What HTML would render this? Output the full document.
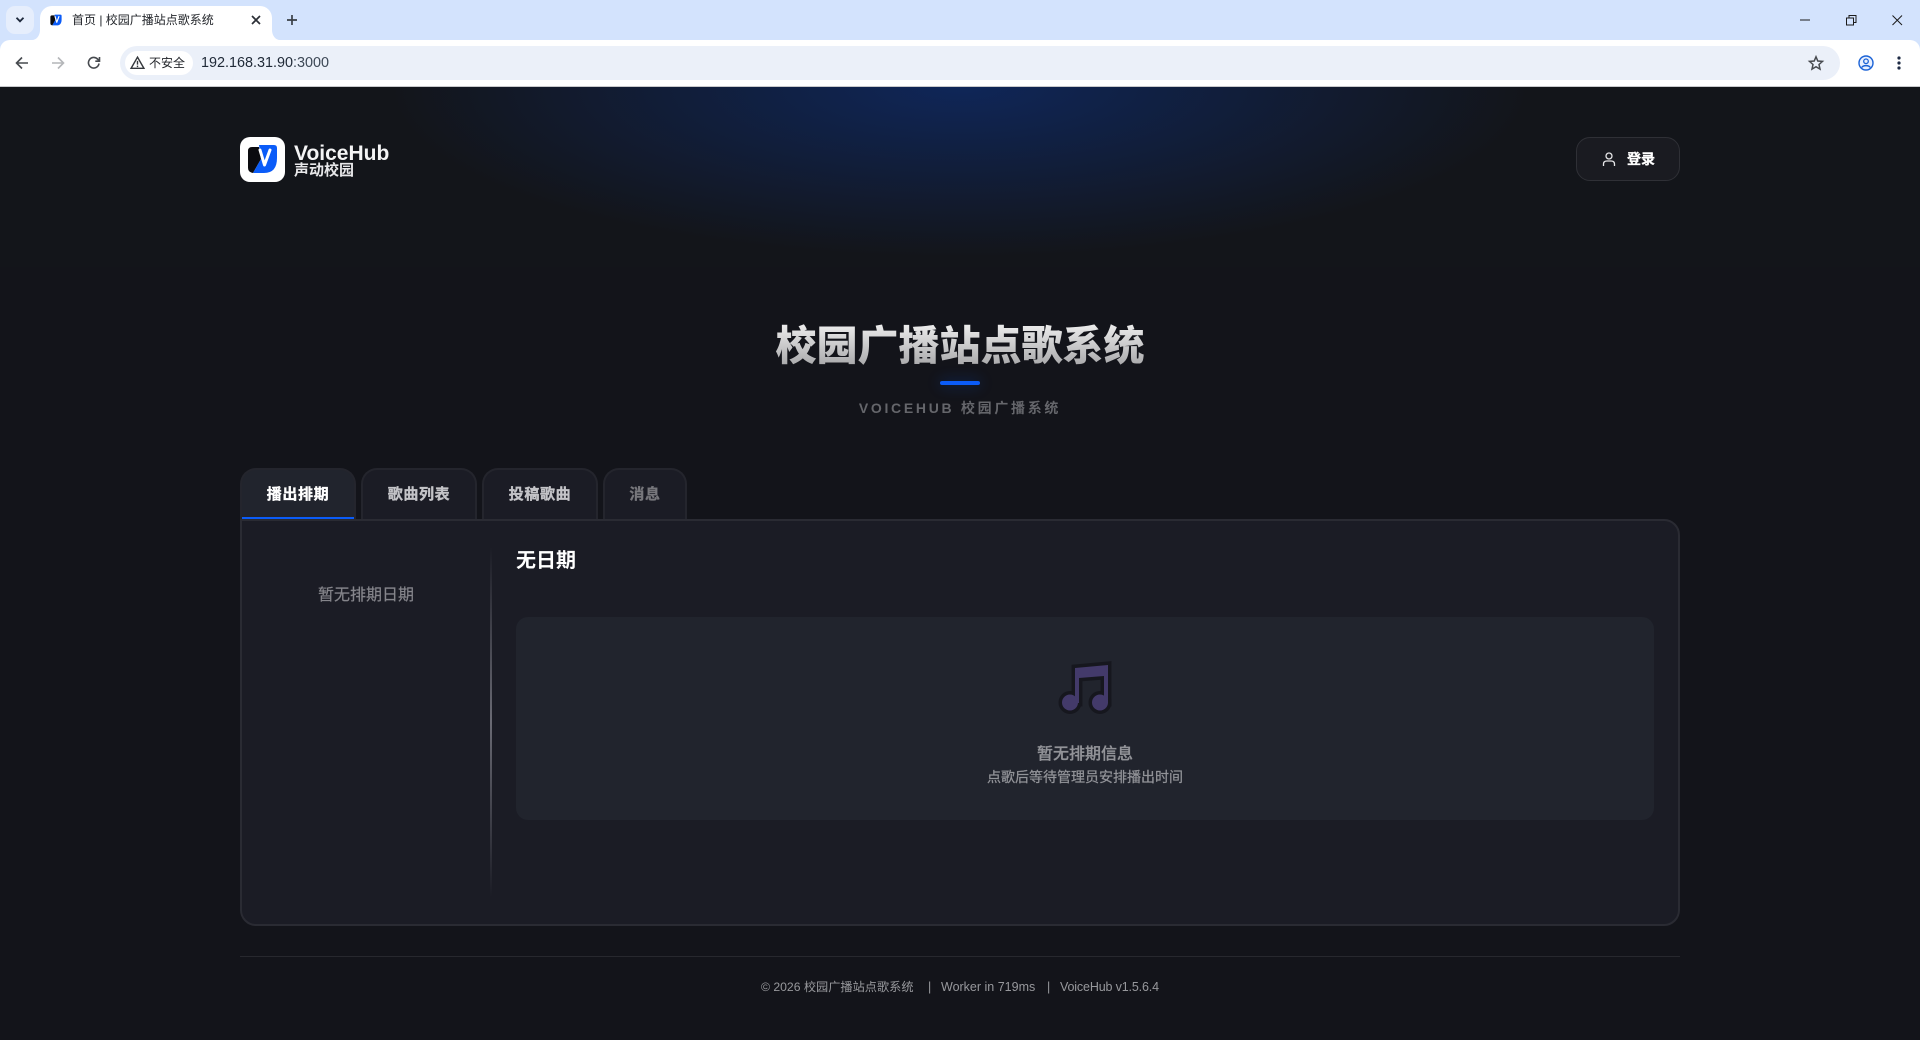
<!DOCTYPE html>
<html lang="zh">
<head>
<meta charset="utf-8">
<title>首页 | 校园广播站点歌系统</title>
<style>
*{box-sizing:border-box;margin:0;padding:0}
html,body{width:1920px;height:1040px;overflow:hidden;background:#13141a}
body{position:relative;font-family:"Liberation Sans","Noto Sans CJK SC",sans-serif}
.a{position:absolute;white-space:nowrap}
.c{text-align:center}
.tab{position:absolute;top:468px;height:51px;background:#1b1c25;border:2px solid #24252d;border-bottom:0;border-radius:16px 16px 0 0;color:#c4c4c8;font-size:15px;font-weight:700;text-align:center;line-height:49px;letter-spacing:.6px;-webkit-text-stroke:.35px currentColor}
svg{position:absolute;overflow:visible}
.f{top:979px;font-size:12.500px;line-height:17px;color:#97989c}
</style>
</head>
<body>
<!-- browser chrome -->
<div class="a" style="left:0;top:0;width:1920px;height:50px;background:#d3e3fd"></div>
<div class="a" style="left:0;top:40px;width:1920px;height:46px;background:#fff;border-radius:10px 10px 0 0"></div>
<div class="a" style="left:0;top:86px;width:1920px;height:1px;background:#c8c9cc"></div>
<div class="a" style="left:6px;top:6px;width:28px;height:28px;border-radius:9px;background:#e6eefc"></div>
<svg style="left:15px;top:16px" width="10" height="8" viewBox="0 0 10 8"><path d="M1.500 1.800 5 5.300 8.500 1.800" fill="none" stroke="#1f2a3d" stroke-width="1.800"/></svg>
<div class="a" style="left:40px;top:6px;width:232px;height:34px;background:#fff;border-radius:12px 12px 0 0"></div>
<svg style="left:32px;top:30px" width="8" height="10"><path d="M8 0V10H0A8 10 0 0 0 8 0Z" fill="#fff"/></svg>
<svg style="left:272px;top:30px" width="8" height="10"><path d="M0 0V10H8A8 10 0 0 1 0 0Z" fill="#fff"/></svg>
<svg style="left:50px;top:14px" width="12" height="12" viewBox="7 7 31 30"><path d="M8 14Q8 10 12 10H19L21 22 13 36Q8 35 8 31Z" fill="#0b0b0f"/><path d="M19 8H34Q37 8 37 11V21Q37 36 24 36H13L21 22Z" fill="#0b5cf8"/><path d="M20 13 24.500 28 30 13" fill="none" stroke="#fff" stroke-width="3" stroke-linecap="round" stroke-linejoin="round"/></svg>
<div class="a" style="left:72px;top:12px;font-size:12px;line-height:16px;color:#23262b">首页 | 校园广播站点歌系统</div>
<svg style="left:251px;top:15px" width="10" height="10"><path d="M1 1 9 9M9 1 1 9" stroke="#2b2f36" stroke-width="1.700"/></svg>
<svg style="left:286px;top:14px" width="12" height="12"><path d="M6 1V11M1 6H11" stroke="#3a3f46" stroke-width="1.700"/></svg>
<svg style="left:1800px;top:19px" width="11" height="2"><path d="M0 1H10" stroke="#1b1b1b" stroke-width="1"/></svg>
<svg style="left:1846px;top:15px" width="11" height="11"><path d="M.5 3H7.500V10H.5ZM3 3V.5H10V7.500H7.500" fill="none" stroke="#1b1b1b"/></svg>
<svg style="left:1892px;top:15px" width="11" height="11"><path d="M.5 .5 10 10M10 .5 .5 10" stroke="#1b1b1b"/></svg>
<svg style="left:15px;top:56px" width="14" height="14" viewBox="0 0 14 14"><path d="M13 7H2M7 1.500 1.500 7 7 12.500" fill="none" stroke="#474a4f" stroke-width="1.600"/></svg>
<svg style="left:51px;top:56px" width="14" height="14" viewBox="0 0 14 14"><path d="M1 7H12M7 1.500 12.500 7 7 12.500" fill="none" stroke="#b4b6b9" stroke-width="1.600"/></svg>
<svg style="left:87px;top:56px" width="14" height="14" viewBox="0 0 14 14"><path d="M12 7.500A5.300 5.300 0 1 1 10.500 3L12.500 5M12.500 1V5.200H8.300" fill="none" stroke="#474a4f" stroke-width="1.600"/></svg>
<div class="a" style="left:120px;top:46px;width:1720px;height:34px;border-radius:17px;background:#ebf0f9"></div>
<div class="a" style="left:125px;top:51px;width:68px;height:24px;border-radius:12px;background:#fff"></div>
<svg style="left:130px;top:56px" width="15" height="14" viewBox="0 0 14 13"><path d="M7 1 13 11.500H1ZM7 4.500V8M7 9V10.300" fill="none" stroke="#35383d" stroke-width="1.300"/></svg>
<div class="a" style="left:149px;top:55px;font-size:12px;line-height:17px;color:#23262b">不安全</div>
<div class="a" style="left:201px;top:55px;font-size:14.400px;line-height:17px;color:#1f2937">192.168.31.90<span style="color:#3d4856">:3000</span></div>
<svg style="left:1808px;top:55px" width="16" height="16" viewBox="0 0 16 16"><path d="M8 1.800 9.800 6 14.500 6.400 11 9.500 12 14.100 8 11.700 4 14.100 5 9.500 1.500 6.400 6.200 6Z" fill="none" stroke="#474a4f" stroke-width="1.500"/></svg>
<svg style="left:1858px;top:55px" width="16" height="16" viewBox="0 0 16 16"><circle cx="8" cy="8" r="7" fill="#e9f0fe" stroke="#1a62d6" stroke-width="1.400"/><circle cx="8" cy="6.300" r="2.300" fill="none" stroke="#1a62d6" stroke-width="1.300"/><path d="M3.800 12.500C5 10 11 10 12.200 12.500" fill="none" stroke="#1a62d6" stroke-width="1.400"/></svg>
<svg style="left:1896px;top:55px" width="6" height="16"><circle cx="3" cy="3" r="1.600" fill="#1e2b45"/><circle cx="3" cy="8" r="1.600" fill="#1e2b45"/><circle cx="3" cy="13" r="1.600" fill="#1e2b45"/></svg>

<!-- page -->
<div class="a" style="left:0;top:87px;width:1920px;height:953px;background:#13141a"></div>
<div class="a" style="left:0;top:87px;width:1920px;height:180px;background:radial-gradient(ellipse 570px 170px at 960px 0,#0f2658 0%,#13151a 100%)"></div>

<!-- logo -->
<svg style="left:240px;top:137px" width="45" height="45" viewBox="0 0 45 45">
<rect width="45" height="45" rx="10" fill="#fff"/>
<path d="M8 14Q8 10 12 10H19L21 22 13 36Q8 35 8 31Z" fill="#0b0b0f"/>
<path d="M19 8H34Q37 8 37 11V21Q37 36 24 36H13L21 22Z" fill="#0b5cf8"/>
<path d="M20 13 24.500 28 30 13" fill="none" stroke="#fff" stroke-width="3" stroke-linecap="round" stroke-linejoin="round"/>
</svg>
<div class="a" style="left:294px;top:142px;font-size:21px;line-height:24px;font-weight:700;color:#f4f4f5">VoiceHub</div>
<div class="a" style="left:294px;top:162px;font-size:15px;line-height:18px;font-weight:700;color:#e8e8ea">声动校园</div>

<!-- login -->
<div class="a" style="left:1576px;top:137px;width:104px;height:44px;border-radius:14px;background:#1a1b21;border:1.500px solid #2f3036"></div>
<svg style="left:1602px;top:152px" width="14" height="15" viewBox="0 0 14 15"><circle cx="7" cy="4" r="3" fill="none" stroke="#e6e6e8" stroke-width="1.300"/><path d="M1.500 14V12C1.500 9.500 3 9 5 9H9C11 9 12.500 9.500 12.500 12V14" fill="none" stroke="#e6e6e8" stroke-width="1.300"/></svg>
<div class="a" style="left:1627px;top:150px;font-size:14px;line-height:18px;font-weight:700;color:#fff;-webkit-text-stroke:.3px #fff">登录</div>

<!-- heading -->
<div class="a c" style="left:660px;top:319px;width:600px;font-size:41px;line-height:54px;font-weight:900;background:linear-gradient(180deg,#f5f5f5,#9d9d9f);-webkit-background-clip:text;background-clip:text;color:transparent">校园广播站点歌系统</div>
<div class="a" style="left:940px;top:381px;width:40px;height:4px;border-radius:2px;background:#0b5cf8;box-shadow:0 0 14px rgba(11,92,248,.4)"></div>
<div class="a c" style="left:660px;top:399px;width:600px;font-size:14px;line-height:18px;font-weight:700;letter-spacing:2.700px;color:#65666b">VOICEHUB 校园广播系统</div>

<!-- tabs -->
<div class="tab" style="left:240px;width:116px;background:#21242d;color:#fff">播出排期</div>
<div class="tab" style="left:361px;width:116px">歌曲列表</div>
<div class="tab" style="left:482px;width:116px">投稿歌曲</div>
<div class="tab" style="left:603px;width:84px;color:#77777c">消息</div>
<div class="a" style="left:242px;top:517px;width:112px;height:2px;background:#0b5cf8"></div>

<!-- panel -->
<div class="a" style="left:240px;top:519px;width:1440px;height:407px;background:#1b1c25;border:2px solid #2a2b33;border-radius:0 16px 16px 16px"></div>
<div class="a" style="left:490px;top:547px;width:2px;height:350px;background:linear-gradient(180deg,rgba(120,120,130,0),rgba(140,140,150,.7) 50%,rgba(120,120,130,0))"></div>
<div class="a c" style="left:266px;top:585px;width:200px;font-size:16px;line-height:22px;color:#85858b;-webkit-text-stroke:.2px currentColor">暂无排期日期</div>
<div class="a" style="left:516px;top:547px;font-size:20px;line-height:28px;font-weight:700;color:#fff">无日期</div>
<div class="a" style="left:516px;top:617px;width:1138px;height:203px;border-radius:12px;background:#21242d"></div>
<svg style="left:0;top:0" width="1920" height="1040">
<g stroke="#16171e" stroke-width="7" stroke-linejoin="miter" fill="#16171e"><polygon points="1075,668 1108,665 1108,703 1104,703 1104,676 1079,678 1079,703 1075,703"/><circle cx="1070" cy="702.500" r="8"/><circle cx="1100" cy="702.500" r="8"/></g>
<g fill="#433a6a"><polygon points="1075,668 1108,665 1108,703 1104,703 1104,676 1079,678 1079,703 1075,703"/><circle cx="1070" cy="702.500" r="8"/><circle cx="1100" cy="702.500" r="8"/></g>
</svg>
<div class="a c" style="left:885px;top:744px;width:400px;font-size:16px;line-height:22px;font-weight:500;color:#929398;-webkit-text-stroke:.3px currentColor">暂无排期信息</div>
<div class="a c" style="left:885px;top:767px;width:400px;font-size:14px;line-height:20px;color:#929398;-webkit-text-stroke:.25px currentColor">点歌后等待管理员安排播出时间</div>

<!-- footer -->
<div class="a" style="left:240px;top:956px;width:1440px;height:1px;background:#27282e"></div>
<div class="a f" style="left:761px;font-size:12.200px">© 2026 校园广播站点歌系统</div>
<div class="a f" style="left:928px">|</div>
<div class="a f" style="left:941px">Worker in 719ms</div>
<div class="a f" style="left:1047px">|</div>
<div class="a f" style="left:1060px;letter-spacing:-.15px">VoiceHub v1.5.6.4</div>
</body>
</html>
